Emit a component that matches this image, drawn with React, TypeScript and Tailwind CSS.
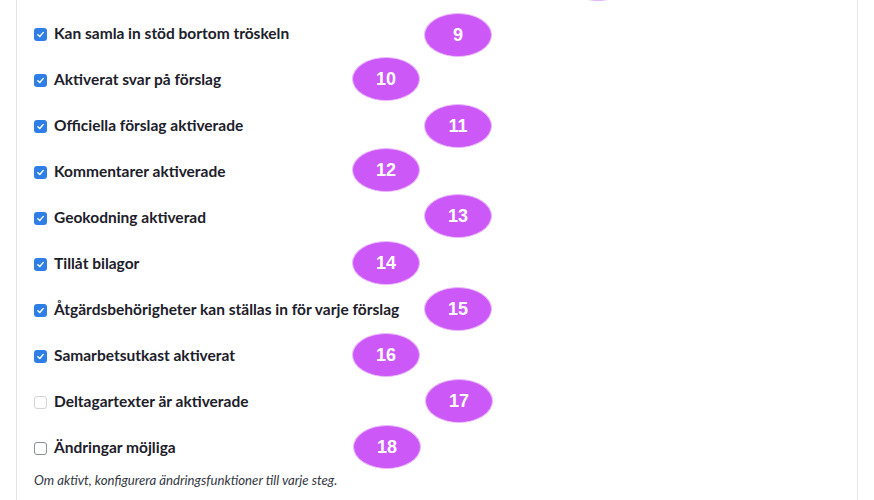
import React from "react";

// Feature toggles shown in the step settings form
interface Toggle {
  label: string;
  checked: boolean;
  muted?: boolean;
}

const toggles: Toggle[] = [
  { label: "Kan samla in stöd bortom tröskeln", checked: true },
  { label: "Aktiverat svar på förslag", checked: true },
  { label: "Officiella förslag aktiverade", checked: true },
  { label: "Kommentarer aktiverade", checked: true },
  { label: "Geokodning aktiverad", checked: true },
  { label: "Tillåt bilagor", checked: true },
  { label: "Åtgärdsbehörigheter kan ställas in för varje förslag", checked: true },
  { label: "Samarbetsutkast aktiverat", checked: true },
  { label: "Deltagartexter är aktiverade", checked: false, muted: true },
  { label: "Ändringar möjliga", checked: false },
];

// Annotation bubbles placed over the form
const markers = [
  { n: "", x: 598, y: -21 },
  { n: "9", x: 458, y: 35 },
  { n: "10", x: 386, y: 79 },
  { n: "11", x: 458, y: 126 },
  { n: "12", x: 386, y: 170 },
  { n: "13", x: 458, y: 216 },
  { n: "14", x: 386, y: 263 },
  { n: "15", x: 458, y: 309 },
  { n: "16", x: 386, y: 355 },
  { n: "17", x: 459, y: 401 },
  { n: "18", x: 387, y: 447 },
];

function Checkbox({ checked, muted }: { checked: boolean; muted?: boolean }) {
  if (checked) {
    return (
      <span className="flex h-[13px] w-[13px] shrink-0 items-center justify-center rounded-[3px] bg-[#2f7ee6]">
        <svg viewBox="0 0 12 12" className="h-[9px] w-[9px]" fill="none" stroke="white" strokeWidth="2" strokeLinecap="round" strokeLinejoin="round">
          <path d="M2.5 6.3 L5 8.6 L9.5 3.5" />
        </svg>
      </span>
    );
  }
  return (
    <span
      className={`h-[13px] w-[13px] shrink-0 rounded-[3px] border bg-white ${
        muted ? "border-[#d4d4d8]" : "border-[#8a8f98]"
      }`}
    />
  );
}

export default function App() {
  return (
    <div className="relative h-[500px] w-[874px] overflow-hidden bg-white" style={{ fontFamily: "Lato, sans-serif" }}>
      <div className="ml-[16px] h-full w-[842px] border-x border-[#e5e5e5] px-[17px] pt-[11px]">
        <div className="flex flex-col">
          {toggles.map((t, i) => (
            <div key={i} className="flex h-[46px] items-center gap-[7px]">
              <Checkbox checked={t.checked} muted={t.muted} />
              <span className="text-[15.5px] font-bold text-[#1c202a]">{t.label}</span>
            </div>
          ))}
        </div>
        <p className="-mt-px text-[13.2px] italic leading-[20px] text-[#33373f]">
          Om aktivt, konfigurera ändringsfunktioner till varje steg.
        </p>
      </div>

      {markers.map((m, i) => (
        <div
          key={i}
          className="absolute flex h-[44px] w-[68px] -translate-x-1/2 -translate-y-1/2 items-center justify-center rounded-[50%] border border-[#e9b7fb] bg-[#cc58f8] text-[18px] font-bold text-white"
          style={{ left: m.x, top: m.y, fontFamily: '"Liberation Sans", sans-serif' }}
        >
          {m.n}
        </div>
      ))}
    </div>
  );
}
